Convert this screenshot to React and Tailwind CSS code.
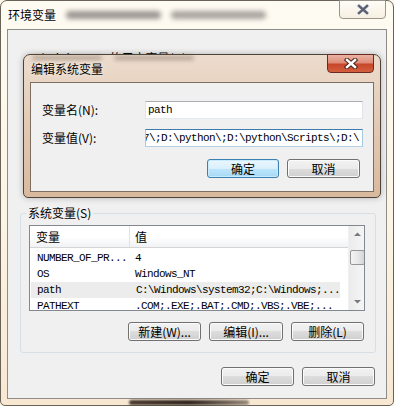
import React from "react";

const mono = "font-['Liberation_Mono',monospace] text-[11px] tracking-[-0.6px]";

const rows = [
  { name: "NUMBER_OF_PR...", value: "4" },
  { name: "OS", value: "Windows_NT" },
  { name: "path", value: "C:\\Windows\\system32;C:\\Windows;...", hot: true },
  { name: "PATHEXT", value: ".COM;.EXE;.BAT;.CMD;.VBS;.VBE;..." },
];

const Btn = ({ children, primary, w = "w-[73px]" }) => (
  <button
    className={`flex h-[19px] ${w} items-center justify-center rounded-[3px] border text-[12px] leading-none ${
      primary
        ? "border-[#3c7fb1] bg-[linear-gradient(#eaf6fd_0%,#d9f0fc_50%,#bee6fd_50%,#a7d9f5_100%)] shadow-[inset_0_0_0_1px_#c8ecfd]"
        : "border-[#707070] bg-[linear-gradient(#f2f2f2_0%,#ebebeb_50%,#dddddd_50%,#cfcfcf_100%)] shadow-[inset_0_0_0_1px_#fbfbfb]"
    }`}
  >
    {children}
  </button>
);

const CloseX = ({ fg, outline }) => (
  <svg width="14" height="11" viewBox="0 0 14 11">
    <path d="M3 2 L11 9 M11 2 L3 9" stroke={outline} strokeWidth="4.5" strokeLinecap="square" />
    <path d="M3 2 L11 9 M11 2 L3 9" stroke={fg} strokeWidth="2.5" strokeLinecap="square" />
  </svg>
);

const TextBox = ({ children, focused }) => (
  <div
    className={`flex h-[18px] w-[218px] items-center overflow-hidden border bg-white ${
      focused
        ? "justify-end border-[#a4c9e3] border-t-[#3d7bad] border-b-[#b5cfe7] pr-[3px]"
        : "border-[#e2e3ea] border-t-[#abadb3] border-b-[#e3e9ef] pl-[2px]"
    }`}
  >
    <span className={`whitespace-nowrap ${mono}`}>{children}</span>
  </div>
);

export default function App() {
  return (
    <div className="relative h-[406px] w-[394px] overflow-hidden bg-[#fdf7ea] font-['Noto_Sans_CJK_SC',sans-serif] text-[12px] text-black">
      {/* outer window: 环境变量 */}
      <div className="flex h-full flex-col rounded-t-[7px] rounded-b-[5px] border border-[#6a6257] bg-linear-to-b from-[#fefbf2] via-[#fcf5e6] to-[#f8e8d2]">
        <div className="relative flex h-[28px] items-center pl-[7px]">
          <span className="leading-[14px] [text-shadow:0_0_6px_#fff,0_0_3px_#fff]">环境变量</span>
          <div className="ml-[10px] flex items-center gap-[10px] blur-[2.5px]">
            <div className="h-[8px] w-[95px] rounded-full bg-[#9a9590]" />
            <div className="h-[8px] w-[95px] rounded-full bg-[#a8a39e]" />
          </div>
          <div className="absolute right-[7px] -top-px flex h-[19px] w-[47px] items-center justify-center rounded-b-[4px] border border-[#9a958c] bg-linear-to-b from-[#fffdf7] to-[#f6efe2]">
            <CloseX fg="#5d6270" outline="#eef0f4" />
          </div>
        </div>

        <div className="mx-[6px] h-[370px] border border-[#8e8c88] bg-[#f0f0f0]">
          <div className="flex h-full flex-col">
            <div className="h-[183px] pl-[22px] pt-[21px] leading-[14px]">
              Administrator 的用户变量(U)
            </div>

            {/* 系统变量 group */}
            <div className="relative ml-[12px] flex h-[140px] w-[356px] flex-col rounded-[3px] border border-[#d5dfe5] px-[8px] pt-[11px]">
              <span className="absolute -top-[8px] left-[5px] bg-[#f0f0f0] px-[2px] leading-[14px]">
                系统变量(S)
              </span>

              <div className="flex h-[86px] w-[336px] overflow-hidden border border-[#828790] bg-white">
                <div className="flex flex-1 flex-col">
                  <div className="flex h-[22px] shrink-0 border-b border-[#d5d5d5] bg-linear-to-b from-white via-white to-[#f1f2f4]">
                    <div className="flex w-[100px] items-center border-r border-[#e3e4e6] pl-[6px]">变量</div>
                    <div className="flex items-center pl-[5px]">值</div>
                  </div>
                  <div className="flex flex-col pt-[2px]">
                    {rows.map((r) => (
                      <div
                        key={r.name}
                        className={`flex h-[16px] shrink-0 items-center ${r.hot ? "mx-[1px] mr-[8px] bg-[#ececec]" : ""}`}
                      >
                        <span className={`w-[100px] whitespace-nowrap ${r.hot ? "pl-[6px]" : "pl-[7px]"} ${mono}`}>
                          {r.name}
                        </span>
                        <span className={`whitespace-nowrap pl-[5px] ${mono}`}>{r.value}</span>
                      </div>
                    ))}
                  </div>
                </div>
                <div className="flex w-[17px] shrink-0 flex-col items-center border-l border-[#f0f0f0] bg-linear-to-r from-[#ebebeb] to-[#f6f6f6]">
                  <svg width="17" height="17" viewBox="0 0 17 17">
                    <path d="M5 10 L8.5 6.5 L12 10 Z" fill="#7a7a7a" />
                  </svg>
                  <div className="mt-[7px] h-[15px] w-[15px] rounded-[2px] border border-[#979797] bg-linear-to-r from-[#f3f3f3] via-[#e8e8e8] to-[#d6d6d6]" />
                  <div className="flex-1" />
                  <svg width="17" height="17" viewBox="0 0 17 17">
                    <path d="M5 7 L8.5 10.5 L12 7 Z" fill="#7a7a7a" />
                  </svg>
                </div>
              </div>

              <div className="mt-[11px] flex justify-end gap-[8px] pr-[3px]">
                <Btn>新建(W)...</Btn>
                <Btn w="w-[74px]">编辑(I)...</Btn>
                <Btn>删除(L)</Btn>
              </div>
            </div>

            <div className="mt-[14px] flex justify-end gap-[8px] pr-[11px]">
              <Btn>确定</Btn>
              <Btn>取消</Btn>
            </div>
          </div>
        </div>

        <div className="flex flex-1 items-end pl-[128px]">
          <div className="h-[5px] w-[120px] rounded-full bg-linear-to-r from-[#4a3c30] via-[#2e241c] to-[#9a8c7c] blur-[1px]" />
        </div>
      </div>

      {/* inner dialog: 编辑系统变量 */}
      <div className="absolute left-[23px] top-[54px] flex h-[144px] w-[358px] flex-col rounded-t-[7px] rounded-b-[5px] border border-[#4d4338] bg-linear-to-b from-[#ecdccd] via-[#e3c9b3] to-[#d9b99e] shadow-[0_0_6px_rgba(0,0,0,0.25)]">
        <div className="relative flex h-[27px] items-center pl-[7px]">
          <div className="absolute left-[8px] top-[1px] flex gap-[12px] opacity-40 blur-[2px]">
            <div className="h-[4px] w-[70px] rounded-full bg-[#5a4636]" />
            <div className="h-[4px] w-[80px] rounded-full bg-[#5a4636]" />
          </div>
          <span className="relative leading-[14px] [text-shadow:0_0_6px_#f6ece2,0_0_3px_#f6ece2]">编辑系统变量</span>
          <div className="absolute right-[6px] -top-px flex h-[19px] w-[47px] items-center justify-center rounded-b-[4px] border border-[#6b2a1d] bg-[linear-gradient(#eab3a4_0%,#de8d78_45%,#c8462b_55%,#d3603f_100%)]">
            <CloseX fg="#ffffff" outline="#4a2219" />
          </div>
        </div>

        <div className="mx-[6px] flex h-[110px] flex-col border border-[#7c6f62] bg-[#f0f0f0] pl-[11px]">
          <div className="mt-[18px] flex items-center">
            <span className="w-[103px] leading-[14px]">变量名(N):</span>
            <TextBox>path</TextBox>
          </div>
          <div className="mt-[10px] flex items-center">
            <span className="w-[103px] leading-[14px]">变量值(V):</span>
            <TextBox focused>{"C:\\Python27\\;D:\\python\\;D:\\python\\Scripts\\;D:\\"}</TextBox>
          </div>
          <div className="mt-[12px] flex justify-end gap-[8px] pr-[13px]">
            <Btn primary w="w-[72px]">确定</Btn>
            <Btn>取消</Btn>
          </div>
        </div>
      </div>
    </div>
  );
}
